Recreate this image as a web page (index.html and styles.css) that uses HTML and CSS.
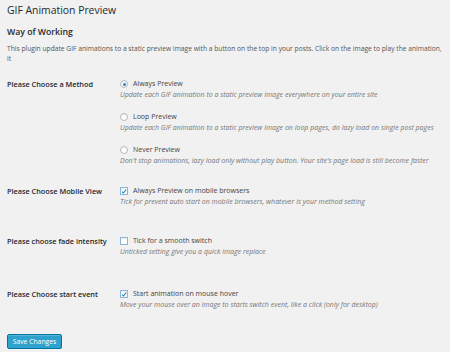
FILE: index.html
```html
<!DOCTYPE html>
<html>
  <head>
    <link rel="stylesheet" href="styles.css">
  </head>
  <body>
    <div class="wrap">
      <h1>GIF Animation Preview</h1>
      <h2>Way of Working</h2>
      <p class="intro">This plugin update GIF animations to a static preview image with a button on the top in your posts. Click on the image to play the animation, it</p>
      <form class="form-table">
        <div class="row row-method">
          <div class="th">Please Choose a Method</div>
          <div class="td">
            <div class="option">
              <label class="choice">
                <span class="radio checked"></span>
                Always Preview
              </label>
              <p class="description">Update each GIF animation to a static preview image everywhere on your entire site</p>
            </div>
            <div class="option">
              <label class="choice">
                <span class="radio"></span>
                Loop Preview
              </label>
              <p class="description">Update each GIF animation to a static preview image on loop pages, do lazy load on single post pages</p>
            </div>
            <div class="option">
              <label class="choice">
                <span class="radio"></span>
                Never Preview
              </label>
              <p class="description">Don't stop animations, lazy load only without play button. Your site's page load is still become faster</p>
            </div>
          </div>
        </div>
        <div class="row row-mobile">
          <div class="th">Please Choose Mobile View</div>
          <div class="td">
            <label class="choice">
              <span class="checkbox checked">
                <svg viewBox="0 0 10 10" width="7" height="7"><path d="M1.5 5.2 L4 7.6 L8.6 1.8" fill="none" stroke="#1e8cbe" stroke-width="1.8"/></svg>
              </span>
              Always Preview on mobile browsers
            </label>
            <p class="description">Tick for prevent auto start on mobile browsers, whatever is your method setting</p>
          </div>
        </div>
        <div class="row row-fade">
          <div class="th">Please choose fade intensity</div>
          <div class="td">
            <label class="choice">
              <span class="checkbox"></span>
              Tick for a smooth switch
            </label>
            <p class="description">Unticked setting give you a quick image replace</p>
          </div>
        </div>
        <div class="row row-event">
          <div class="th">Please Choose start event</div>
          <div class="td">
            <label class="choice">
              <span class="checkbox checked">
                <svg viewBox="0 0 10 10" width="7" height="7"><path d="M1.5 5.2 L4 7.6 L8.6 1.8" fill="none" stroke="#1e8cbe" stroke-width="1.8"/></svg>
              </span>
              Start animation on mouse hover
            </label>
            <p class="description">Move your mouse over an image to starts switch event, like a click (only for desktop)</p>
          </div>
        </div>
        <div class="submit">
          <button type="button" class="button-primary">Save Changes</button>
        </div>
      </form>
    </div>
  </body>
</html>
```
FILE: styles.css
```css
body {
  margin: 0;
  background: #f1f1f1;
  color: #444;
  font-family: "Open Sans", "Noto Sans", sans-serif;
  font-size: 7px;
  line-height: 10px;
  overflow: hidden;
}
.wrap {
  padding: 0 5px 0 7px;
}
h1 {
  margin: 0;
  padding-top: 2px;
  font-size: 10.4px;
  line-height: 16px;
  font-weight: 400;
  color: #23282d;
}
h2 {
  margin: 7px 0 0;
  font-size: 8.7px;
  line-height: 14px;
  font-weight: 600;
  color: #23282d;
}
.intro {
  margin: 5px 0 0;
  color: #555;
  font-size: 6.7px;
  line-height: 10px;
}
.form-table {
  display: flex;
  flex-direction: column;
}
.row {
  display: grid;
  grid-template-columns: 113px 1fr;
}
.th {
  font-weight: 600;
  color: #23282d;
  font-size: 7.3px;
}
.row-method {
  margin-top: 15px;
}
.row-mobile {
  margin-top: 20px;
}
.row-fade {
  margin-top: 29px;
}
.row-event {
  margin-top: 32px;
}
.option + .option {
  margin-top: 12px;
}
.choice {
  display: flex;
  align-items: center;
  gap: 5px;
  color: #444;
  font-size: 7px;
  height: 10px;
}
.description {
  margin: 1px 0 0;
  font-style: italic;
  color: #777;
  font-size: 7px;
  line-height: 10px;
  white-space: nowrap;
}
.radio,
.checkbox {
  flex: none;
  box-sizing: border-box;
  width: 8px;
  height: 8px;
  border: 1px solid #b4b9be;
  background: #fff;
  box-shadow: inset 0 1px 2px rgba(0, 0, 0, 0.07);
  display: flex;
  align-items: center;
  justify-content: center;
}
.radio {
  border-radius: 50%;
}
.radio.checked::after {
  content: "";
  width: 3px;
  height: 3px;
  border-radius: 50%;
  background: #1e8cbe;
}
.checkbox {
  border-color: #8cb6d9;
}
.submit {
  margin-top: 24px;
}
.button-primary {
  font-family: inherit;
  font-size: 6.8px;
  line-height: 13px;
  height: 15px;
  width: 55px;
  padding: 0;
  background: #2ea2cc;
  border: 1px solid #0074a2;
  border-radius: 2px;
  color: #fff;
  box-shadow: inset 0 1px 0 rgba(120, 200, 230, 0.5);
  cursor: pointer;
}
```
